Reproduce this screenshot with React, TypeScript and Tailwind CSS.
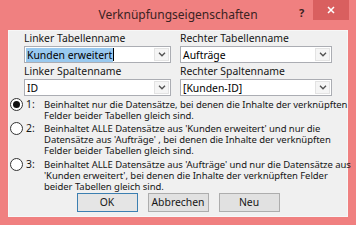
import React from "react";

const font = { fontFamily: '"Noto Sans", "Open Sans", sans-serif' };

function Chevron() {
  return (
    <svg width="8" height="5" viewBox="0 0 8 5">
      <path d="M1 0.8 L4 3.8 L7 0.8" fill="none" stroke="#505050" strokeWidth="1.3" />
    </svg>
  );
}

function Combo({ value, selected, width }: { value: string; selected?: boolean; width: string }) {
  return (
    <div className={`flex h-[17px] shrink-0 items-center border border-[#abadb3] bg-white ${width}`}>
      <div className="flex flex-1 items-center pl-[1px]">
        {selected ? (
          <span className="bg-[#99c9ef] px-[1px] leading-[14px] text-black">{value}</span>
        ) : (
          <span className="px-[1px] leading-[14px] text-black">{value}</span>
        )}
        {selected && <span className="h-[13px] w-px bg-black" />}
      </div>
      <div className="mr-[1px] flex h-[13px] w-[15px] items-center justify-center border border-[#e3e3e3] bg-[#f5f5f5]">
        <Chevron />
      </div>
    </div>
  );
}

function Radio({ checked }: { checked?: boolean }) {
  return (
    <div className="flex h-[13px] w-[13px] shrink-0 items-center justify-center rounded-full border border-[#333] bg-white">
      {checked && <div className="h-[7px] w-[7px] rounded-full bg-[#111]" />}
    </div>
  );
}

function Option({ n, checked, lines, cls }: { n: string; checked?: boolean; lines: string[]; cls?: string }) {
  return (
    <div className={`flex ${cls ?? ""}`}>
      <div className="flex w-[35px] shrink-0 items-start pl-[1px]">
        <div className="flex h-[11px] items-center">
          <Radio checked={checked} />
          <span className="ml-[3px] leading-[11px]">{n}</span>
        </div>
      </div>
      <div className="flex shrink-0 flex-col text-[9.5px] leading-[11px] tracking-[-0.05px]">
        {lines.map((l, i) => (
          <span key={i} className="whitespace-nowrap">{l}</span>
        ))}
      </div>
    </div>
  );
}

export default function App() {
  return (
    <div className="flex h-[225px] w-[356px] flex-col overflow-hidden bg-[#f08080] text-[10.4px] text-[#161616]" style={font}>
      <div className="relative flex h-[30px] shrink-0 items-center justify-center">
        <span className="text-[12px] text-[#3a2222]">Verknüpfungseigenschaften</span>
        <span className="absolute left-[299px] top-[5px] text-[11px] font-bold text-[#3a2222]">?</span>
        <div className="absolute left-[313px] top-0 flex h-[20px] w-[36px] items-center justify-center bg-[#d95f5f]">
          <svg width="8" height="8" viewBox="0 0 8 8">
            <path d="M1 1 L7 7 M7 1 L1 7" stroke="white" strokeWidth="1.5" />
          </svg>
        </div>
      </div>
      <div className="mx-[8px] mb-[8px] flex flex-1 flex-col border border-[#f7f7f7] bg-[#f0f0f0]">
        <div className="flex pl-[15px]">
          <div className="flex w-[156px] flex-col">
            <span className="leading-[15px]">Linker Tabellenname</span>
            <Combo value="Kunden erweitert" selected width="w-[147px]" />
            <span className="leading-[16px]">Linker Spaltenname</span>
            <Combo value="ID" width="w-[147px]" />
          </div>
          <div className="flex flex-col">
            <span className="leading-[15px]">Rechter Tabellenname</span>
            <Combo value="Aufträge" width="w-[152px]" />
            <span className="leading-[16px]">Rechter Spaltenname</span>
            <Combo value="[Kunden-ID]" width="w-[152px]" />
          </div>
        </div>
        <div className="mt-[3px] flex flex-col">
          <Option
            n="1:"
            checked
            cls="mb-[2px]"
            lines={[
              "Beinhaltet nur die Datensätze, bei denen die Inhalte der verknüpften",
              "Felder beider Tabellen gleich sind.",
            ]}
          />
          <Option
            n="2:"
            cls="mb-[3px]"
            lines={[
              "Beinhaltet ALLE Datensätze aus 'Kunden erweitert' und nur die",
              "Datensätze aus 'Aufträge' , bei denen die Inhalte der verknüpften",
              "Felder beider Tabellen gleich sind.",
            ]}
          />
          <Option
            n="3:"
            lines={[
              "Beinhaltet ALLE Datensätze aus 'Aufträge' und nur die Datensätze aus",
              "'Kunden erweitert', bei denen die Inhalte der verknüpften Felder",
              "beider Tabellen gleich sind.",
            ]}
          />
        </div>
        <div className="mt-[1px] flex justify-center gap-[10px]">
          <button className="h-[19px] w-[61px] border border-[#3c7fb1] bg-[#e5e5e5] leading-[15px]">OK</button>
          <button className="h-[19px] w-[61px] border border-[#adadad] bg-[#e1e1e1] leading-[15px]">Abbrechen</button>
          <button className="h-[19px] w-[61px] border border-[#adadad] bg-[#e1e1e1] leading-[15px]">Neu</button>
        </div>
      </div>
    </div>
  );
}
